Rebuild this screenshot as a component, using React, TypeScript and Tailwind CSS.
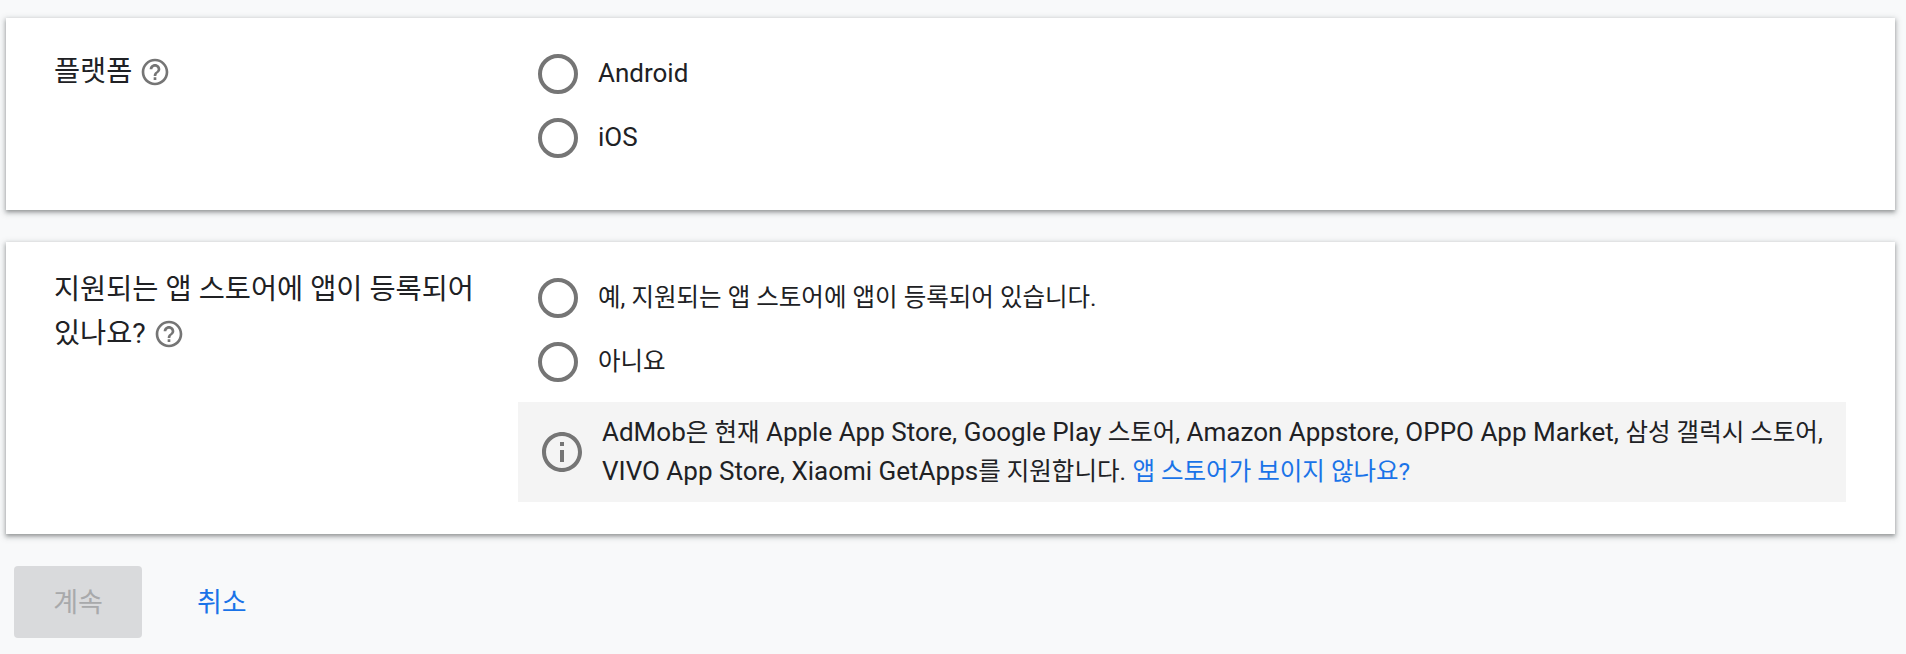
import React from 'react';

const HELP_PATH =
  'M11 18h2v-2h-2v2zm1-16C6.48 2 2 6.48 2 12s4.48 10 10 10 10-4.48 10-10S17.52 2 12 2zm0 18c-4.41 0-8-3.59-8-8s3.59-8 8-8 8 3.59 8 8-3.59 8-8 8zm0-14c-2.21 0-4 1.79-4 4h2c0-1.1.9-2 2-2s2 .9 2 2c0 2-3 1.75-3 5h2c0-2.25 3-2.5 3-5 0-2.21-1.79-4-4-4z';
const INFO_PATH =
  'M11 7h2v2h-2zm0 4h2v6h-2zm1-9C6.48 2 2 6.48 2 12s4.48 10 10 10 10-4.48 10-10S17.52 2 12 2zm0 18c-4.41 0-8-3.59-8-8s3.59-8 8-8 8 3.59 8 8-3.59 8-8 8z';

const HelpIcon = () => (
  <svg viewBox="0 0 24 24" className="inline-block w-8 h-8 align-[-7px] fill-[#757575]">
    <path d={HELP_PATH} />
  </svg>
);

// korean runs sit a little narrower than the latin ones
const K: React.FC<{ children: React.ReactNode }> = ({ children }) => (
  <span className="text-[24.5px]">{children}</span>
);

const Radio: React.FC<{ children: React.ReactNode }> = ({ children }) => (
  <label className="flex items-center h-16 pl-5">
    <span className="w-10 h-10 rounded-full border-[4px] border-[#757575] shrink-0" />
    <span className="ml-5 pb-[2px] text-[26px] text-[#202124]">{children}</span>
  </label>
);

export default function App() {
  return (
    <div className="min-h-[654px] bg-[#f8f9fa] pt-[18px] pl-[6px] pr-[11px] font-['Roboto','Noto_Sans_CJK_KR',sans-serif]">
      {/* Platform */}
      <section className="flex h-[192px] pl-12 pr-[49px] pt-6 bg-white shadow-[0_2px_4px_rgba(60,64,67,0.45),0_2px_6px_2px_rgba(60,64,67,0.15)]">
        <div className="w-[464px] shrink-0 pt-[8px] text-[28.4px] leading-[44px] text-[#202124]">
          플랫폼 <HelpIcon />
        </div>
        <div className="flex-1">
          <Radio>Android</Radio>
          <Radio>iOS</Radio>
        </div>
      </section>

      {/* App store */}
      <section className="flex h-[292px] mt-8 pl-12 pr-[49px] pt-6 bg-white shadow-[0_2px_4px_rgba(60,64,67,0.45),0_2px_6px_2px_rgba(60,64,67,0.15)]">
        <div className="w-[464px] shrink-0 pr-[40px] pt-[2px] text-[28.4px] leading-[44px] text-[#202124]">
          지원되는 앱 스토어에 앱이 등록되어 있나요? <HelpIcon />
        </div>
        <div className="flex-1">
          <Radio>
            <K>예, 지원되는 앱 스토어에 앱이 등록되어 있습니다.</K>
          </Radio>
          <Radio>
            <K>아니요</K>
          </Radio>
          <div className="flex items-center h-[100px] mt-2 pl-5 bg-[#f4f4f4]">
            <svg viewBox="0 0 24 24" className="w-12 h-12 shrink-0 fill-[#757575]">
              <path d={INFO_PATH} />
            </svg>
            <p className="ml-4 text-[26px] leading-[39px] text-[#202124]">
              AdMob<K>은 현재</K> Apple App Store, Google Play <K>스토어,</K> Amazon Appstore, OPPO App Market,{' '}
              <K>삼성 갤럭시 스토어,</K>
              <br />
              VIVO App Store, Xiaomi GetApps<K>를 지원합니다.</K>{' '}
              <a className="text-[#1a73e8]">
                <K>앱 스토어가 보이지 않나요?</K>
              </a>
            </p>
          </div>
        </div>
      </section>

      {/* Actions */}
      <div className="flex items-center mt-8 ml-2">
        <button className="w-32 h-[72px] pt-[3px] rounded bg-[#d9dadc] text-[27px] text-[#a8a9ab]">계속</button>
        <button className="ml-[55px] pt-[3px] text-[27px] text-[#1a73e8]">취소</button>
      </div>
    </div>
  );
}
